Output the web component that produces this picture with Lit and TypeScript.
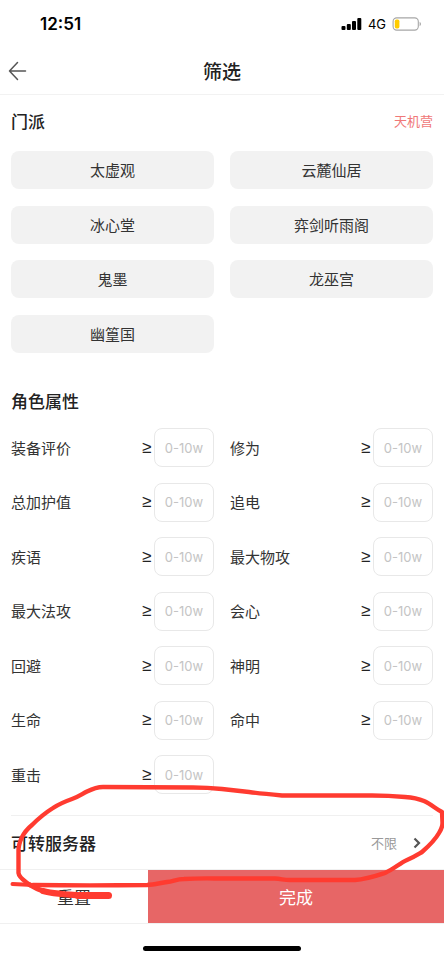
import { LitElement, html, css, svg } from "lit";
import { customElement, property } from "lit/decorators.js";

const SECTS = ["太虚观", "云麓仙居", "冰心堂", "弈剑听雨阁", "鬼墨", "龙巫宫", "幽篁国"];
const ATTRS = ["装备评价", "修为", "总加护值", "追电", "疾语", "最大物攻", "最大法攻", "会心", "回避", "神明", "生命", "命中", "重击"];

@customElement("status-bar")
class StatusBar extends LitElement {
  static styles = css`
    :host { display: flex; align-items: center; justify-content: space-between; height: 48px; padding: 0 22px 0 40px; color: #000; }
    .time { font: 600 17px/24px Inter, "Noto Sans", sans-serif; }
    .right { display: flex; align-items: center; gap: 6px; }
    .net { font: 400 13px/16px Inter, sans-serif; }
    svg { display: block; }
  `;
  render() {
    return html`
      <span class="time">12:51</span>
      <span class="right">
        <svg width="21" height="14" viewBox="0 0 21 14" aria-hidden="true">
          <rect x="0.5" y="9" width="4" height="4" rx="1" />
          <rect x="5.8" y="7" width="4" height="6" rx="1" />
          <rect x="11" y="4" width="4" height="9" rx="1" />
          <rect x="16.3" y="1" width="4" height="12" rx="1" />
        </svg>
        <span class="net">4G</span>
        <svg width="30" height="14" viewBox="0 0 30 14" aria-hidden="true">
          <rect x="1.1" y="0.9" width="25.2" height="12.2" rx="3.6" fill="none" stroke="#a6a6a6" stroke-width="1.1" />
          <rect x="2.8" y="2.6" width="4.6" height="8.8" rx="1.6" fill="#ffcc00" />
          <path d="M27.6 4.8q1.4.7 1.4 2.2t-1.4 2.2z" fill="#a6a6a6" />
        </svg>
      </span>`;
  }
}

@customElement("attr-field")
class AttrField extends LitElement {
  @property() label = "";
  static styles = css`
    :host { display: block; color: #333; }
    .field { display: flex; align-items: center; font-size: 15px; line-height: 24px; }
    .name { flex: 1; }
    .ge { width: 10px; margin-right: 2px; font: 17px/24px "Liberation Sans", sans-serif; color: #222; }
    input {
      box-sizing: border-box; width: 60px; height: 39px; padding: 0; margin: 0;
      border: 1px solid #e8e8e8; border-radius: 8px; background: #fff; text-align: center;
      font: 13px/16px Inter, "Noto Sans", sans-serif; color: #333; outline: none;
    }
    input::placeholder { color: #c4c4c4; opacity: 1; }
  `;
  render() {
    return html`<label class="field">
      <span class="name">${this.label}</span>
      <span class="ge">≥</span>
      <input type="text" inputmode="numeric" placeholder="0-10w" />
    </label>`;
  }
}

const marks = svg`
  <path stroke-width="4" d="M12.500 884L33 885" />
  <path stroke-width="4.400" d="M33 885C70 885.500 110 885.500 147 885C154 884.600 160 883 167 882C174 881 177 879 184 879C200 878 212 878.500 222 878.500L275 878.500C282 879 284 880 290 880L355 880C366 879.500 376 876 385 873C394 869 400 863 407 860C414 857 417 855 422 852C430 845 435 840 439 833C442 828 442.500 826 442.500 823L442 812C436 809 431 804 424 801C418 798.500 412 797.500 405 797C394 796 384 795.500 372 795.500L282 795.500C271 794.500 260 793.500 249 792C240 791 231 790 222 789C212 788 203 787.500 193 787.500L103 787C97 787 92 789 87 791.500C82 794 78 797 72 799C65 801.500 59 804 53 808C45 813 39 818 32 825C27 829 24 833 21.500 838C19 844 18.500 846 18.500 850L18.500 873C19 878 25 881 30 885" />
  <path stroke-width="5" d="M30 885C34 887.500 38 889.500 43 891" />
  <path stroke-width="6" d="M43 891C52 893.500 64 894.600 83 895.500" />
  <path stroke-width="7" d="M78 895.500L108.500 895.500" />
`;

@customElement("app-root")
class AppRoot extends LitElement {
  static styles = css`
    :host {
      display: flex; flex-direction: column; min-height: 100vh; background: #fff; color: #222;
      font-family: "Noto Sans CJK SC", sans-serif;
    }
    button { font-family: inherit; border: 0; margin: 0; padding: 0; cursor: pointer; }
    h1, h2 { margin: 0; font-weight: 500; }
    .nav {
      display: grid; grid-template-columns: 44px 1fr 44px; align-items: center;
      height: 46px; border-bottom: 1px solid #f2f2f2;
    }
    .back { background: none; height: 44px; padding-left: 8px; display: flex; align-items: center; }
    h1 { font-size: 19px; line-height: 28px; text-align: center; }
    section { padding: 0 11px; }
    .head { display: flex; align-items: center; justify-content: space-between; height: 52px; padding-bottom: 4px; }
    h2 { font-size: 17px; line-height: 26px; }
    .picked { font-size: 13px; line-height: 20px; color: #f07878; }
    .grid { display: grid; grid-template-columns: 1fr 1fr; column-gap: 16px; align-content: space-between; }
    .sects { min-height: 202px; }
    .chip { height: 38px; border-radius: 8px; background: #f2f2f2; color: #333; font-size: 15px; line-height: 22px; }
    .attrs { min-height: 366px; }
    .attr-head { padding: 22px 0 1px; }
    .server {
      display: flex; align-items: center; width: calc(100% - 22px); height: 54px;
      margin: 21px 11px 0; border-top: 1px solid #f0f0f0; background: none; color: #222; text-align: left;
    }
    .server h2 { flex: 1; }
    .value { font-size: 13px; line-height: 20px; color: #999; margin-right: 16px; }
    .chev { margin-right: 12px; }
    .actions { display: grid; grid-template-columns: 1fr 2fr; height: 53px; border: 1px solid #f0f0f0; border-width: 1px 0; }
    .actions button { font-size: 17px; line-height: 26px; }
    .reset { background: #fff; color: #333; }
    .done { background: #e76666; color: #fff; }
    .home { width: 158px; height: 5px; border-radius: 3px; background: #000; margin: 22px auto 13px; }
    .page { position: relative; }
    .marks { position: absolute; left: 0; top: 0; width: 100%; pointer-events: none; }
    svg { display: block; }
  `;
  render() {
    return html`
      <div class="page">
        <status-bar></status-bar>
        <header class="nav">
          <button class="back" aria-label="返回">
            <svg width="20" height="20" viewBox="0 0 20 20" fill="none" stroke="#555" stroke-width="1.5" stroke-linecap="round" stroke-linejoin="round" aria-hidden="true">
              <path d="M17.500 10H1.500M9.500 1.500L1.500 10l8 8.500" />
            </svg>
          </button>
          <h1>筛选</h1>
        </header>
        <main>
          <section>
            <div class="head"><h2>门派</h2><span class="picked">天机营</span></div>
            <div class="grid sects">${SECTS.map((s) => html`<button class="chip">${s}</button>`)}</div>
          </section>
          <section>
            <div class="head attr-head"><h2>角色属性</h2></div>
            <div class="grid attrs">${ATTRS.map((a) => html`<attr-field .label=${a}></attr-field>`)}</div>
          </section>
          <button class="server">
            <h2>可转服务器</h2>
            <span class="value">不限</span>
            <svg class="chev" width="8" height="12" viewBox="0 0 8 12" fill="none" stroke="#555" stroke-width="2.200" aria-hidden="true">
              <path d="M1.500 1.500L6 6l-4.500 4.500" />
            </svg>
          </button>
        </main>
        <footer>
          <div class="actions">
            <button class="reset">重置</button>
            <button class="done">完成</button>
          </div>
          <div class="home"></div>
        </footer>
        <svg class="marks" viewBox="0 0 444 960" fill="none" stroke="#ff3b30" stroke-linecap="round" stroke-linejoin="round" aria-hidden="true">${marks}</svg>
      </div>`;
  }
}
